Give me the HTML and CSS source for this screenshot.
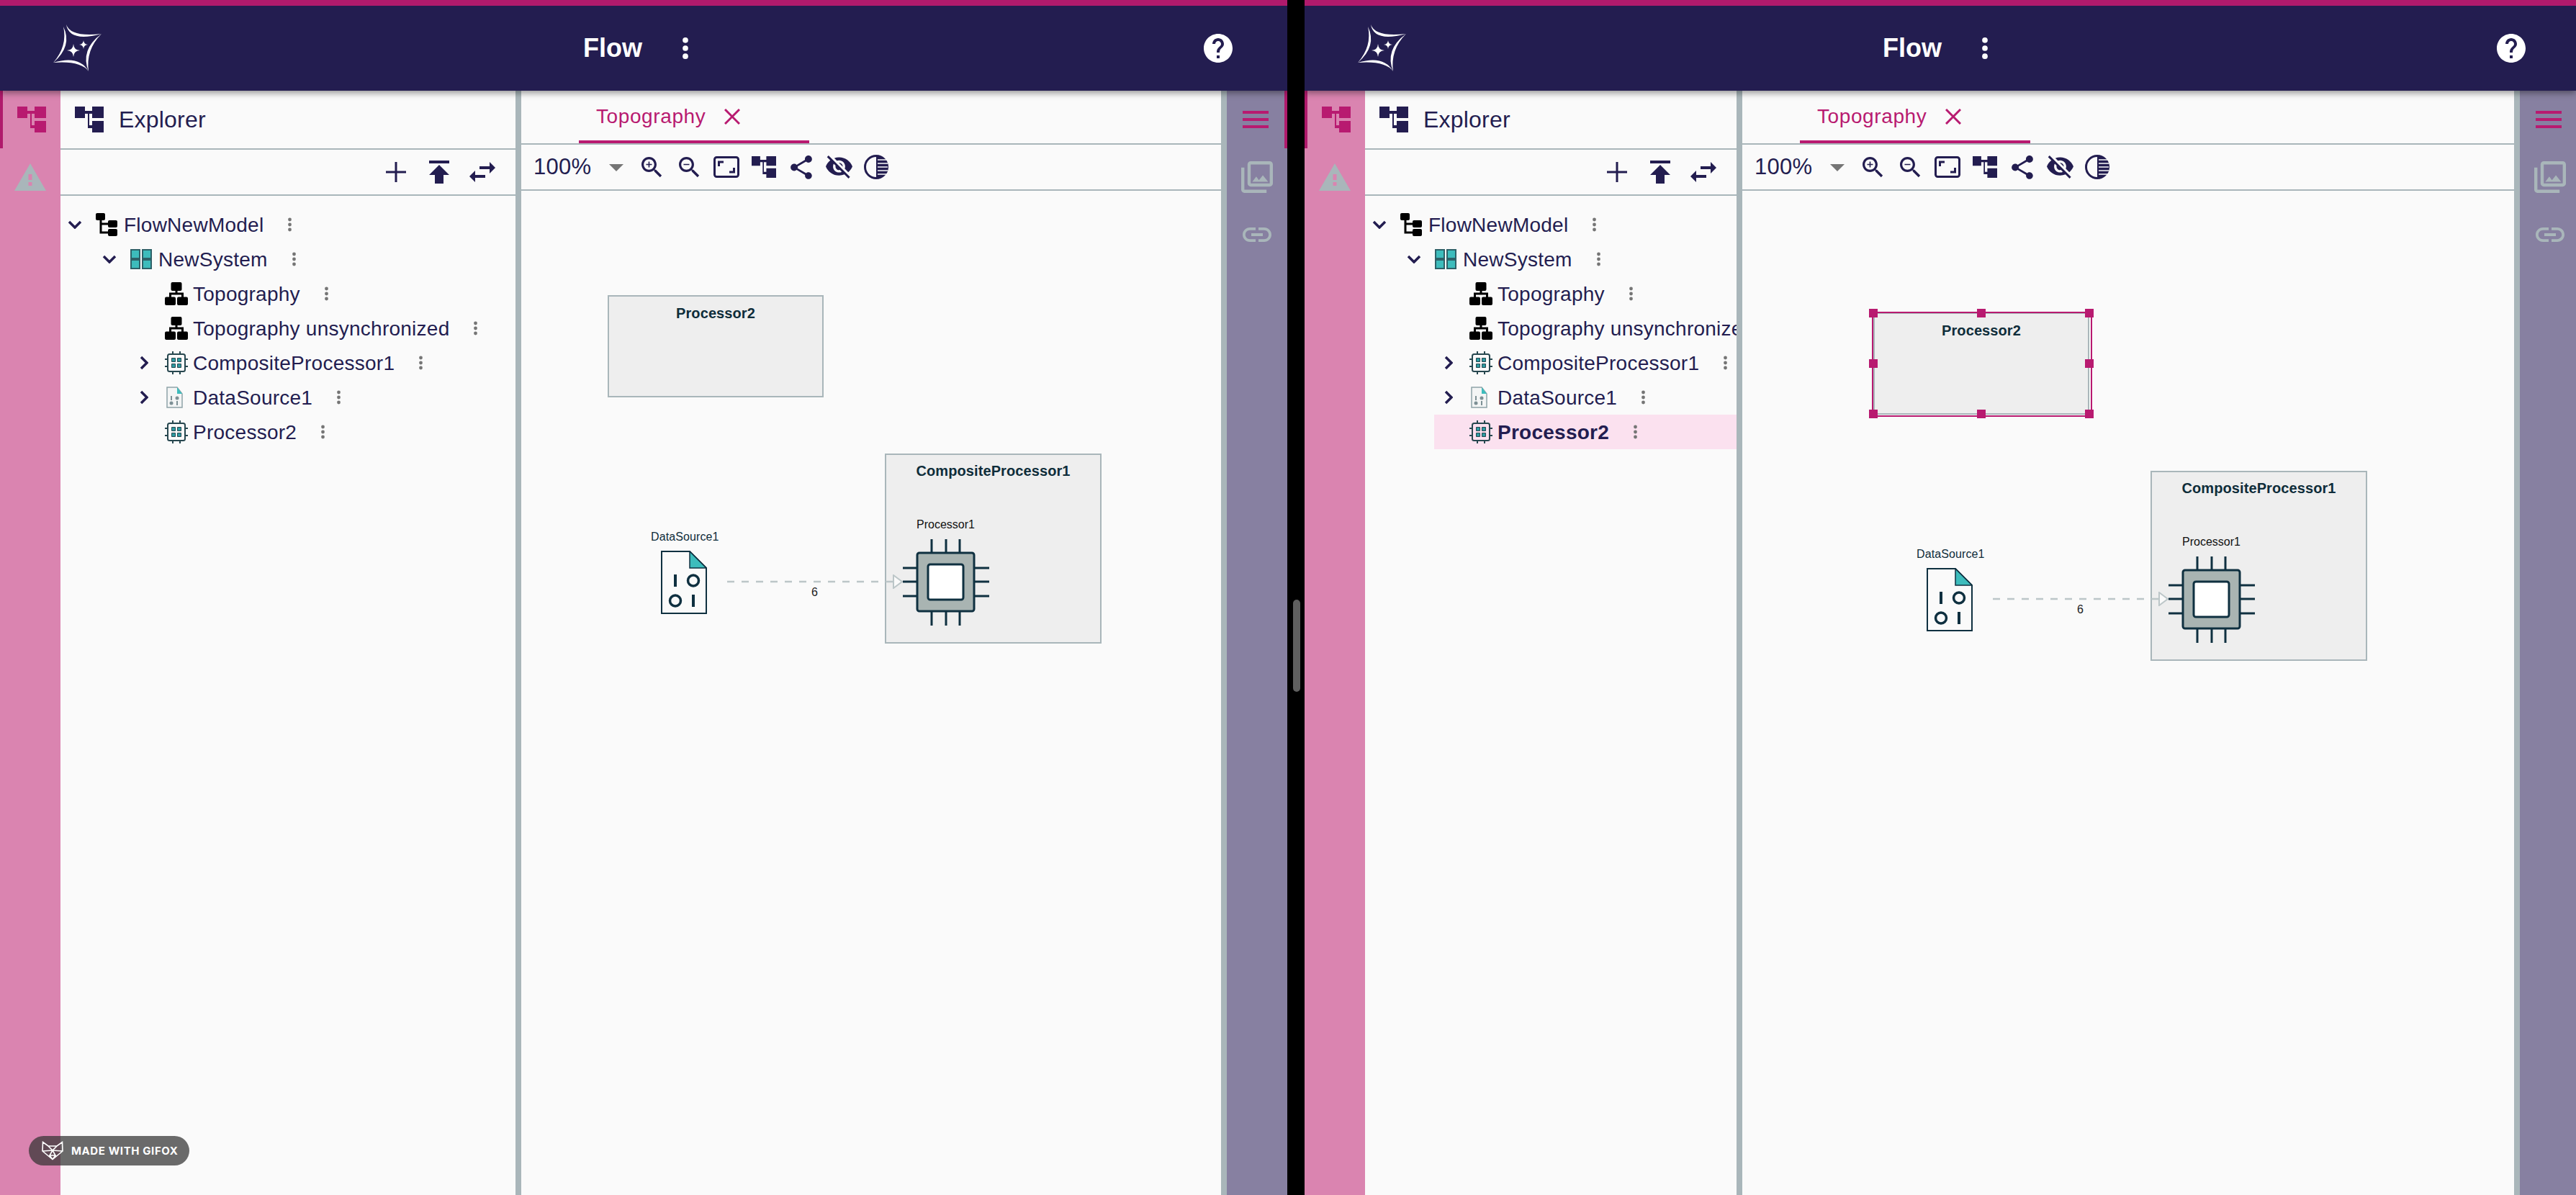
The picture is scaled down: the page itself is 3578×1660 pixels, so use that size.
FILE: index.html
```html
<!DOCTYPE html>
<html lang="en">
<head>
<meta charset="utf-8">
<title>Flow</title>
<link rel="stylesheet" href="styles.css">
</head>
<body>
<svg class="defs" aria-hidden="true">
  <symbol id="logo" viewBox="0 0 67 66">
    <path d="M18 0Q24 18 67 13Q22 25 18 0Z"/><path d="M67 13Q45 35 49 65Q37 35 67 13Z"/><path d="M49 65Q38 50 0 53Q36 42 49 65Z"/><path d="M0 53Q20 30 14 3Q27 30 0 53Z"/>
    <path d="M28 27Q28.500 35.500 37 36Q28.500 36.500 28 45Q27.500 36.500 19 36Q27.500 35.500 28 27Z"/><path d="M42 22Q42.400 27.600 48 28Q42.400 28.400 42 34Q41.600 28.400 36 28Q41.600 27.600 42 22Z"/>
  </symbol>
  <symbol id="help" viewBox="2 2 20 20"><path d="M12 2C6.48 2 2 6.48 2 12s4.48 10 10 10 10-4.48 10-10S17.52 2 12 2zm1 17h-2v-2h2v2zm2.070-7.750l-.9.920C13.450 12.900 13 13.500 13 15h-2v-.5c0-1.100.45-2.100 1.170-2.830l1.240-1.260c.37-.36.59-.86.59-1.410 0-1.100-.9-2-2-2s-2 .9-2 2H8c0-2.210 1.790-4 4-4s4 1.790 4 4c0 .88-.36 1.680-.93 2.250z"/></symbol>
  <symbol id="hier" viewBox="0 0 40 36" preserveAspectRatio="none"><path d="M0 0H14V16H0ZM24 0H40V16H24ZM24 20H40V36H24ZM14 6H24V10H20V26H24V30H18V10H14Z"/></symbol>
  <symbol id="warn" viewBox="0 0 44 38"><path class="warn-tri" d="M22 0L44 38H0Z"/><path class="warn-mark" d="M19.500 15H24.500V23H19.500ZM19.500 26H24.500V31H19.500Z"/></symbol>
  <symbol id="menu" viewBox="0 0 36 24"><path d="M0 0H36V4H0ZM0 10H36V14H0ZM0 20H36V24H0Z"/></symbol>
  <symbol id="gallery" viewBox="2 2 20 20"><path d="M20 4v12H8V4h12m0-2H8c-1.100 0-2 .9-2 2v12c0 1.100.9 2 2 2h12c1.100 0 2-.9 2-2V4c0-1.100-.9-2-2-2zm-8.500 9.670l1.690 2.260 2.480-3.100L19 15H9zM2 6v14c0 1.100.9 2 2 2h14v-2H4V6H2z"/></symbol>
  <symbol id="link" viewBox="2 7 20 10"><path d="M3.900 12c0-1.710 1.390-3.100 3.100-3.100h4V7H7c-2.760 0-5 2.240-5 5s2.240 5 5 5h4v-1.900H7c-1.710 0-3.100-1.390-3.100-3.100zM8 13h8v-2H8v2zm9-6h-4v1.900h4c1.710 0 3.100 1.390 3.100 3.100s-1.390 3.100-3.100 3.100h-4V17h4c2.760 0 5-2.240 5-5s-2.240-5-5-5z"/></symbol>
  <symbol id="plus" viewBox="0 0 28 28"><path d="M12.500 0H15.500V12.500H28V15.500H15.500V28H12.500V15.500H0V12.500H12.500Z"/></symbol>
  <symbol id="publish" viewBox="5 4 14 16"><path d="M5 4v2h14V4H5zm0 10h4v6h6v-6h4l-7-7-7 7z"/></symbol>
  <symbol id="swap" viewBox="3 5 18 14"><path d="M6.990 11L3 15l3.990 4v-3H14v-2H6.990v-3zM21 9l-4-4v3h-7v2h7v3l4-4z"/></symbol>
  <symbol id="dots" viewBox="0 0 5 20"><circle cx="2.500" cy="3" r="2.400"/><circle cx="2.500" cy="10" r="2.400"/><circle cx="2.500" cy="17" r="2.400"/></symbol>
  <symbol id="chev-down" viewBox="0 0 20 12"><path class="chev-line" d="M2 2L10 10L18 2"/></symbol>
  <symbol id="chev-right" viewBox="0 0 12 20"><path class="chev-line" d="M2 2L10 10L2 18"/></symbol>
  <symbol id="model" viewBox="0 0 30 32"><rect width="13" height="10" rx="2"/><rect x="17" y="10" width="13" height="10" rx="2"/><rect x="17" y="22" width="13" height="10" rx="2"/><path class="line-3" d="M7 9V27H18M7 15H18"/></symbol>
  <symbol id="system" viewBox="0 0 30 28"><path class="teal" d="M1 1H13V13H1ZM17 1H29V13H17ZM1 15H13V27H1ZM17 15H29V27H17Z"/></symbol>
  <symbol id="network" viewBox="0 0 32 32"><rect x="8.500" width="15" height="12" rx="2"/><rect y="20.500" width="15" height="11.500" rx="2"/><rect x="17" y="20.500" width="15" height="11.500" rx="2"/><path class="line-3" d="M16 11V16M7.500 21V16H24.500V21"/></symbol>
  <symbol id="chip" viewBox="0 0 32 32"><rect class="chip-body" x="4" y="4" width="24" height="24" rx="2.500"/><path class="chip-pin" d="M11 0V4M21 0V4M11 28V32M21 28V32M0 11H4M0 21H4M28 11H32M28 21H32"/><path class="chip-cell" d="M9.500 9.500H14.500V14.500H9.500ZM17.500 9.500H22.500V14.500H17.500ZM9.500 17.500H14.500V22.500H9.500ZM17.500 17.500H22.500V22.500H17.500Z"/></symbol>
  <symbol id="doc" viewBox="0 0 23 30"><path class="doc-sheet" d="M1 1H15L22 10V29H1Z"/><path class="doc-fold" d="M15 1L22 10H15Z"/><path class="doc-bits" d="M6 13H8V19H6ZM14 20H16V26H14Z"/><circle class="doc-bits" cx="15" cy="16" r="2.500"/><circle class="doc-bits" cx="7" cy="23" r="2.500"/></symbol>
  <symbol id="close" viewBox="0 0 22 22"><path class="close-line" d="M1 1L21 21M21 1L1 21"/></symbol>
  <symbol id="zoom-in" viewBox="3 3 18 18"><path d="M15.500 14h-.79l-.28-.27C15.410 12.590 16 11.110 16 9.500 16 5.910 13.090 3 9.500 3S3 5.910 3 9.500 5.910 16 9.500 16c1.610 0 3.090-.59 4.230-1.570l.27.28v.79l5 4.990L20.490 19l-4.990-5zm-6 0C7.010 14 5 11.990 5 9.500S7.010 5 9.500 5 14 7.010 14 9.500 11.990 14 9.500 14zM12 10h-2v2H9v-2H7V9h2V7h1v2h2v1z"/></symbol>
  <symbol id="zoom-out" viewBox="3 3 18 18"><path d="M15.500 14h-.79l-.28-.27C15.410 12.590 16 11.110 16 9.500 16 5.910 13.090 3 9.500 3S3 5.910 3 9.500 5.910 16 9.500 16c1.610 0 3.090-.59 4.230-1.570l.27.28v.79l5 4.990L20.490 19l-4.990-5zm-6 0C7.010 14 5 11.990 5 9.500S7.010 5 9.500 5 14 7.010 14 9.500 11.990 14 9.500 14zM7 9h5v1H7z"/></symbol>
  <symbol id="fit" viewBox="0 0 36 30"><rect class="fit-line" x="1.500" y="1.500" width="33" height="27" rx="3"/><path class="fit-line" d="M7.500 14V8H14M28.500 16V22H22"/></symbol>
  <symbol id="share" viewBox="3 2 18 20"><path d="M18 16.080c-.76 0-1.440.3-1.960.77L8.910 12.700c.05-.23.09-.46.09-.7s-.04-.47-.09-.7l7.050-4.110c.54.5 1.250.81 2.040.81 1.660 0 3-1.340 3-3s-1.340-3-3-3-3 1.340-3 3c0 .24.04.47.09.7L8.040 9.810C7.500 9.310 6.790 9 6 9c-1.660 0-3 1.340-3 3s1.340 3 3 3c.79 0 1.500-.31 2.040-.81l7.120 4.160c-.05.21-.08.43-.08.65 0 1.610 1.310 2.920 2.920 2.920 1.610 0 2.920-1.310 2.920-2.920s-1.310-2.920-2.920-2.920z"/></symbol>
  <symbol id="eye-off" viewBox="1 3 22 19"><path d="M12 7c2.760 0 5 2.240 5 5 0 .65-.13 1.260-.36 1.830l2.920 2.920c1.510-1.260 2.700-2.890 3.430-4.750-1.730-4.390-6-7.500-11-7.500-1.400 0-2.740.25-3.980.7l2.160 2.160C10.740 7.130 11.350 7 12 7zM2 4.270l2.280 2.280.46.46C3.080 8.300 1.780 10.020 1 12c1.730 4.390 6 7.500 11 7.500 1.550 0 3.030-.3 4.380-.84l.42.42L19.730 22 21 20.730 3.270 3 2 4.270zM7.530 9.800l1.550 1.550c-.05.21-.08.43-.08.65 0 1.660 1.340 3 3 3 .22 0 .44-.03.65-.08l1.550 1.550c-.67.33-1.410.53-2.200.53-2.760 0-5-2.240-5-5 0-.79.2-1.530.53-2.200zm4.310-.78l3.150 3.150.02-.16c0-1.660-1.340-3-3-3l-.17.01z"/></symbol>
  <symbol id="contrast" viewBox="0 0 34 34"><path d="M17 1.500A15.500 15.500 0 0 1 17 32.500Z"/><circle class="fit-line" cx="17" cy="17" r="15.500"/><path class="stripes" d="M19 7H32M19 12H33M19 17H33M19 22H33M19 27H32"/></symbol>
  <symbol id="big-doc" viewBox="0 0 64 88"><path class="bd-sheet" d="M1 1H40L63 24V87H1Z"/><path class="bd-fold" d="M40 1L63 24H40Z"/><path class="bd-bit" d="M18 33H22V50H18ZM43 61H47V78H43Z"/><ellipse class="bd-ring" cx="45" cy="41.500" rx="7.500" ry="7.500"/><ellipse class="bd-ring" cx="20" cy="69.500" rx="7.500" ry="7.500"/></symbol>
  <symbol id="big-chip" viewBox="0 0 120 120"><path class="bc-pin" d="M40 0V19M60 0V19M79 0V19M40 100V120M60 100V120M79 100V120M0 40H20M0 59H20M0 79H20M100 40H120M100 59H120M100 79H120"/><rect class="bc-body" x="20" y="19" width="79" height="81" rx="3"/><rect class="bc-core" x="35" y="35" width="49" height="49" rx="3"/></symbol>
  <symbol id="edge" viewBox="0 0 244 20"><path class="edge-line" d="M0 10H231"/><path class="edge-head" d="M231 1L243 10L231 19Z"/></symbol>
  <symbol id="fox" viewBox="0 0 30 27"><path class="fox-line" d="M1.500 1.500L9 7H21L28.500 1.500L29 14L15 25.500L1 14ZM9 7L15 13L21 7M1 14L15 13L29 14M15 13L11 20H19L15 13M11 20L15 25.500L19 20"/></symbol>
</svg>

<main class="screen">
  <section class="window window-left">
    <header class="topbar">
      <svg class="logo"><use href="#logo"/></svg>
      <div class="app-title title-left"><span class="title-text">Flow</span><svg class="title-dots"><use href="#dots"/></svg></div>
      <svg class="help"><use href="#help"/></svg>
    </header>
    <div class="workspace">
      <nav class="side-left">
        <div class="side-item side-item-active"><svg class="ico-hier"><use href="#hier"/></svg></div>
        <div class="side-item"><svg class="ico-warn"><use href="#warn"/></svg></div>
      </nav>
      <aside class="explorer explorer-wide">
        <div class="explorer-head"><svg class="ico-hier"><use href="#hier"/></svg><span class="explorer-title">Explorer</span></div>
        <div class="explorer-tools">
          <span class="tool"><svg class="ico-plus"><use href="#plus"/></svg></span>
          <span class="tool"><svg class="ico-publish"><use href="#publish"/></svg></span>
          <span class="tool"><svg class="ico-swap"><use href="#swap"/></svg></span>
        </div>
        <ul class="tree">
          <li class="row level-0"><span class="chev-slot"><svg class="chev-d"><use href="#chev-down"/></svg></span><span class="icon-slot"><svg class="ico-model"><use href="#model"/></svg></span><span class="label">FlowNewModel</span><svg class="row-dots"><use href="#dots"/></svg></li>
          <li class="row level-1"><span class="chev-slot"><svg class="chev-d"><use href="#chev-down"/></svg></span><span class="icon-slot"><svg class="ico-system"><use href="#system"/></svg></span><span class="label">NewSystem</span><svg class="row-dots"><use href="#dots"/></svg></li>
          <li class="row level-2"><span class="chev-slot"></span><span class="icon-slot"><svg class="ico-32"><use href="#network"/></svg></span><span class="label">Topography</span><svg class="row-dots"><use href="#dots"/></svg></li>
          <li class="row level-2"><span class="chev-slot"></span><span class="icon-slot"><svg class="ico-32"><use href="#network"/></svg></span><span class="label">Topography unsynchronized</span><svg class="row-dots"><use href="#dots"/></svg></li>
          <li class="row level-2"><span class="chev-slot"><svg class="chev-r"><use href="#chev-right"/></svg></span><span class="icon-slot"><svg class="ico-32"><use href="#chip"/></svg></span><span class="label">CompositeProcessor1</span><svg class="row-dots"><use href="#dots"/></svg></li>
          <li class="row level-2"><span class="chev-slot"><svg class="chev-r"><use href="#chev-right"/></svg></span><span class="icon-slot"><svg class="ico-doc"><use href="#doc"/></svg></span><span class="label">DataSource1</span><svg class="row-dots"><use href="#dots"/></svg></li>
          <li class="row level-2"><span class="chev-slot"></span><span class="icon-slot"><svg class="ico-32"><use href="#chip"/></svg></span><span class="label">Processor2</span><svg class="row-dots"><use href="#dots"/></svg></li>
        </ul>
      </aside>
      <div class="splitter"></div>
      <div class="main">
        <div class="tabs"><div class="tab"><span>Topography</span><svg class="ico-close"><use href="#close"/></svg></div></div>
        <div class="toolbar">
          <div class="zoom-select"><span class="zoom-value">100%</span><span class="caret"></span></div>
          <span class="tbtn"><svg class="ico-zoom"><use href="#zoom-in"/></svg></span>
          <span class="tbtn"><svg class="ico-zoom"><use href="#zoom-out"/></svg></span>
          <span class="tbtn"><svg class="ico-fit"><use href="#fit"/></svg></span>
          <span class="tbtn"><svg class="ico-thier"><use href="#hier"/></svg></span>
          <span class="tbtn"><svg class="ico-share"><use href="#share"/></svg></span>
          <span class="tbtn"><svg class="ico-eye"><use href="#eye-off"/></svg></span>
          <span class="tbtn"><svg class="ico-contrast"><use href="#contrast"/></svg></span>
        </div>
        <div class="canvas">
          <div class="diagram">
            <div class="group group-proc"><span class="group-title">Processor2</span></div>
            <div class="group group-comp"><span class="group-title">CompositeProcessor1</span></div>
            <span class="node-label label-ds">DataSource1</span>
            <svg class="node-ds"><use href="#big-doc"/></svg>
            <svg class="edge"><use href="#edge"/></svg>
            <span class="edge-label">6</span>
            <span class="node-label label-p1">Processor1</span>
            <svg class="node-p1"><use href="#big-chip"/></svg>
          </div>
        </div>
      </div>
      <div class="splitter"></div>
      <nav class="side-right">
        <div class="side-item side-item-marked"><svg class="ico-menu"><use href="#menu"/></svg></div>
        <div class="side-item"><svg class="ico-gallery"><use href="#gallery"/></svg></div>
        <div class="side-item"><svg class="ico-link"><use href="#link"/></svg></div>
      </nav>
    </div>
    <div class="gifox"><svg class="ico-fox"><use href="#fox"/></svg><span>MADE WITH GIFOX</span></div>
  </section>

  <div class="gutter"><div class="thumb"></div></div>

  <section class="window window-right">
    <header class="topbar">
      <svg class="logo"><use href="#logo"/></svg>
      <div class="app-title title-right"><span class="title-text">Flow</span><svg class="title-dots"><use href="#dots"/></svg></div>
      <svg class="help"><use href="#help"/></svg>
    </header>
    <div class="workspace">
      <nav class="side-left">
        <div class="side-item side-item-active"><svg class="ico-hier"><use href="#hier"/></svg></div>
        <div class="side-item"><svg class="ico-warn"><use href="#warn"/></svg></div>
      </nav>
      <aside class="explorer explorer-narrow">
        <div class="explorer-head"><svg class="ico-hier"><use href="#hier"/></svg><span class="explorer-title">Explorer</span></div>
        <div class="explorer-tools">
          <span class="tool"><svg class="ico-plus"><use href="#plus"/></svg></span>
          <span class="tool"><svg class="ico-publish"><use href="#publish"/></svg></span>
          <span class="tool"><svg class="ico-swap"><use href="#swap"/></svg></span>
        </div>
        <ul class="tree">
          <li class="row level-0"><span class="chev-slot"><svg class="chev-d"><use href="#chev-down"/></svg></span><span class="icon-slot"><svg class="ico-model"><use href="#model"/></svg></span><span class="label">FlowNewModel</span><svg class="row-dots"><use href="#dots"/></svg></li>
          <li class="row level-1"><span class="chev-slot"><svg class="chev-d"><use href="#chev-down"/></svg></span><span class="icon-slot"><svg class="ico-system"><use href="#system"/></svg></span><span class="label">NewSystem</span><svg class="row-dots"><use href="#dots"/></svg></li>
          <li class="row level-2"><span class="chev-slot"></span><span class="icon-slot"><svg class="ico-32"><use href="#network"/></svg></span><span class="label">Topography</span><svg class="row-dots"><use href="#dots"/></svg></li>
          <li class="row level-2"><span class="chev-slot"></span><span class="icon-slot"><svg class="ico-32"><use href="#network"/></svg></span><span class="label">Topography unsynchronized</span><svg class="row-dots"><use href="#dots"/></svg></li>
          <li class="row level-2"><span class="chev-slot"><svg class="chev-r"><use href="#chev-right"/></svg></span><span class="icon-slot"><svg class="ico-32"><use href="#chip"/></svg></span><span class="label">CompositeProcessor1</span><svg class="row-dots"><use href="#dots"/></svg></li>
          <li class="row level-2"><span class="chev-slot"><svg class="chev-r"><use href="#chev-right"/></svg></span><span class="icon-slot"><svg class="ico-doc"><use href="#doc"/></svg></span><span class="label">DataSource1</span><svg class="row-dots"><use href="#dots"/></svg></li>
          <li class="row level-2 row-selected"><span class="chev-slot"></span><span class="icon-slot"><svg class="ico-32"><use href="#chip"/></svg></span><span class="label">Processor2</span><svg class="row-dots"><use href="#dots"/></svg></li>
        </ul>
      </aside>
      <div class="splitter"></div>
      <div class="main">
        <div class="tabs"><div class="tab"><span>Topography</span><svg class="ico-close"><use href="#close"/></svg></div></div>
        <div class="toolbar">
          <div class="zoom-select"><span class="zoom-value">100%</span><span class="caret"></span></div>
          <span class="tbtn"><svg class="ico-zoom"><use href="#zoom-in"/></svg></span>
          <span class="tbtn"><svg class="ico-zoom"><use href="#zoom-out"/></svg></span>
          <span class="tbtn"><svg class="ico-fit"><use href="#fit"/></svg></span>
          <span class="tbtn"><svg class="ico-thier"><use href="#hier"/></svg></span>
          <span class="tbtn"><svg class="ico-share"><use href="#share"/></svg></span>
          <span class="tbtn"><svg class="ico-eye"><use href="#eye-off"/></svg></span>
          <span class="tbtn"><svg class="ico-contrast"><use href="#contrast"/></svg></span>
        </div>
        <div class="canvas">
          <div class="diagram diagram-panned">
            <div class="group group-proc"><span class="group-title">Processor2</span></div>
            <div class="selection">
              <i class="handle h-tl"></i><i class="handle h-tc"></i><i class="handle h-tr"></i>
              <i class="handle h-ml"></i><i class="handle h-mr"></i>
              <i class="handle h-bl"></i><i class="handle h-bc"></i><i class="handle h-br"></i>
            </div>
            <div class="group group-comp"><span class="group-title">CompositeProcessor1</span></div>
            <span class="node-label label-ds">DataSource1</span>
            <svg class="node-ds"><use href="#big-doc"/></svg>
            <svg class="edge"><use href="#edge"/></svg>
            <span class="edge-label">6</span>
            <span class="node-label label-p1">Processor1</span>
            <svg class="node-p1"><use href="#big-chip"/></svg>
          </div>
        </div>
      </div>
      <div class="splitter"></div>
      <nav class="side-right side-right-cut">
        <div class="side-item side-item-marked"><svg class="ico-menu"><use href="#menu"/></svg></div>
        <div class="side-item"><svg class="ico-gallery"><use href="#gallery"/></svg></div>
        <div class="side-item"><svg class="ico-link"><use href="#link"/></svg></div>
      </nav>
    </div>
  </section>
</main>
</body>
</html>
```

FILE: styles.css
```css
* { box-sizing: border-box; }
html, body { margin: 0; padding: 0; background: #000; }
body { font-family: "Liberation Sans", Arial, sans-serif; color: #231d50; }
svg { display: block; flex-shrink: 0; fill: currentColor; }
.defs { position: absolute; width: 0; height: 0; }

.screen { display: flex; width: 3578px; height: 1660px; overflow: hidden; }
.window { position: relative; display: flex; flex-direction: column; height: 100%; overflow: hidden; background: #fafafa; }
.window-left { width: 1788px; }
.window-right { width: 1766px; }
.gutter { width: 24px; height: 100%; background: #000; padding: 833px 0 0 8px; }
.thumb { width: 10px; height: 128px; border-radius: 5px; background: #5f5f5f; }

.topbar { position: relative; z-index: 5; flex: none; display: flex; align-items: center; height: 126px; padding: 0 0 0 74px; background: #231d50; border-top: 8px solid #b01a6c; box-shadow: 0 3px 9px rgba(0,0,0,.42); color: #fff; }
.logo { width: 67px; height: 66px; color: #fff; margin-top: -1px; }
.app-title { display: flex; align-items: center; }
.title-left { margin-left: 669px; }
.title-right { margin-left: 662px; }
.title-text { font-size: 36px; font-weight: 700; width: 85px; }
.title-dots { width: 8px; height: 32px; margin-left: 53px; color: #fff; }
.help { width: 40px; height: 40px; margin-left: auto; margin-right: 76px; color: #fff; }
.window-right .help { margin-right: 70px; }

.workspace { flex: 1; display: flex; min-height: 0; }
.side-left { flex: none; width: 84px; background: #da84b0; }
.side-right { flex: none; width: 84px; background: #8780a1; overflow: hidden; }
.side-right-cut { width: 78px; }
.side-item { display: flex; align-items: center; justify-content: center; width: 84px; height: 80px; flex-shrink: 0; }
.side-item-active { border-left: 4px solid #b01a6c; color: #b81a70; }
.side-item-marked { border-right: 4px solid #b01a6c; color: #b81a70; }
.ico-hier { width: 40px; height: 36px; }
.ico-warn { width: 44px; height: 38px; }
.warn-tri { fill: #a9b6ba; }
.warn-mark { fill: #da84b0; }
.ico-menu { width: 36px; height: 24px; }
.ico-gallery { width: 44px; height: 44px; color: #a9b6ba; }
.ico-link { width: 40px; height: 20px; color: #a9b6ba; }

.explorer { flex: none; display: flex; flex-direction: column; overflow: hidden; }
.explorer-wide { width: 632px; }
.explorer-narrow { width: 516px; }
.explorer-head { flex: none; display: flex; align-items: center; height: 82px; padding: 0 0 0 20px; border-bottom: 2px solid #a9b6ba; }
.explorer-title { font-size: 32px; margin-left: 21px; letter-spacing: .2px; }
.explorer-tools { flex: none; display: flex; justify-content: flex-end; height: 64px; padding-right: 16px; border-bottom: 2px solid #a9b6ba; }
.tool { display: flex; align-items: center; justify-content: center; width: 60px; }
.ico-plus { width: 28px; height: 28px; }
.ico-publish { width: 28px; height: 32px; }
.ico-swap { width: 36px; height: 28px; }

.tree { list-style: none; margin: 0; padding: 16px 0 0; }
.row { display: flex; align-items: center; height: 48px; padding-left: 6px; white-space: nowrap; font-size: 28px; letter-spacing: .25px; }
.label { padding-top: 2px; }
.level-1 { margin-left: 48px; }
.level-2 { margin-left: 96px; }
.row-selected { background: #fbe1ef; font-weight: 700; }
.chev-slot { flex: none; display: flex; align-items: center; justify-content: center; width: 28px; margin-right: 15px; }
.chev-d { width: 20px; height: 12px; }
.chev-r { width: 12px; height: 20px; }
.chev-line { fill: none; stroke: #231d50; stroke-width: 3.500; }
.icon-slot { flex: none; display: flex; align-items: center; width: 32px; margin-right: 7px; color: #000; }
.ico-model { width: 30px; height: 32px; }
.ico-system { width: 30px; height: 28px; }
.ico-32 { width: 32px; height: 32px; }
.ico-doc { width: 23px; height: 30px; margin-left: 2px; }
.line-3 { fill: none; stroke: #000; stroke-width: 3; }
.teal { fill: #3dbcbc; stroke: #2e6168; stroke-width: 2; }
.chip-body { fill: none; stroke: #27474f; stroke-width: 2; }
.chip-pin { fill: none; stroke: #27474f; stroke-width: 2; }
.chip-cell { fill: #2d9aa0; stroke: #27474f; stroke-width: 1; }
.doc-sheet { fill: #f3f5f5; stroke: #8ea3a8; stroke-width: 1.500; }
.doc-fold { fill: #3dbcbc; }
.doc-bits { fill: #7d9095; }
.row-dots { width: 5px; height: 20px; margin-left: 34px; color: #757575; }

.splitter { flex: none; width: 8px; background: #a9b6ba; }

.main { flex: 1; min-width: 0; display: flex; flex-direction: column; }
.tabs { flex: none; height: 75px; padding-left: 80px; border-bottom: 2px solid #a9b6ba; }
.tab { display: flex; align-items: center; width: 320px; height: 73px; padding: 2px 0 0 24px; border-bottom: 4px solid #b81a70; color: #b81a70; font-size: 28px; letter-spacing: .6px; }
.ico-close { width: 22px; height: 22px; margin-left: 26px; }
.close-line { fill: none; stroke: #b81a70; stroke-width: 3; }
.toolbar { flex: none; display: flex; align-items: stretch; height: 64px; padding-left: 17px; border-bottom: 2px solid #a9b6ba; }
.zoom-select { display: flex; align-items: center; width: 138px; }
.zoom-value { font-size: 31px; width: 81px; margin-right: 24px; letter-spacing: .3px; }
.caret { width: 0; height: 0; border-left: 10px solid transparent; border-right: 10px solid transparent; border-top: 10px solid #757575; margin-top: 2px; }
.tbtn { display: flex; align-items: center; justify-content: center; width: 52px; }
.ico-zoom { width: 29px; height: 29px; }
.ico-fit { width: 36px; height: 30px; }
.ico-thier { width: 34px; height: 30px; }
.ico-share { width: 30px; height: 33px; }
.ico-eye { width: 37px; height: 32px; }
.ico-contrast { width: 34px; height: 34px; }
.fit-line { fill: none; stroke: #231d50; stroke-width: 3; }
.stripes { fill: none; stroke: #fafafa; stroke-width: 1.500; }

.canvas { flex: 1; min-height: 0; overflow: hidden; }
.diagram { position: relative; width: 1000px; height: 1000px; color: #0f2d3a; }
.diagram-panned { margin: 24px 0 0 62px; }
.group { position: absolute; display: flex; justify-content: center; padding-top: 13px; background: #eeeeee; border: 2px solid #a9b6ba; }
.group-proc { left: 120px; top: 145px; width: 300px; height: 142px; }
.group-comp { left: 505px; top: 365px; width: 301px; height: 264px; padding-top: 12px; }
.group-title { font-size: 20px; font-weight: 700; line-height: 20px; letter-spacing: .1px; }
.node-label { position: absolute; font-size: 16px; line-height: 18px; white-space: nowrap; }
.label-ds { left: 180px; top: 472px; letter-spacing: .1px; }
.label-p1 { left: 549px; top: 455px; color: #111; }
.node-ds { position: absolute; left: 194px; top: 500px; width: 64px; height: 88px; }
.node-p1 { position: absolute; left: 530px; top: 484px; width: 120px; height: 120px; }
.edge { position: absolute; left: 286px; top: 533px; width: 244px; height: 20px; }
.edge-label { position: absolute; left: 403px; top: 549px; font-size: 16px; line-height: 18px; color: #222; }
.bd-sheet { fill: #fafafa; stroke: #0f3040; stroke-width: 2; }
.bd-fold { fill: #3dbcbc; stroke: #0f3040; stroke-width: 1.500; }
.bd-bit { fill: #0f3040; }
.bd-ring { fill: none; stroke: #0f3040; stroke-width: 3.500; }
.bc-pin { fill: none; stroke: #0f3040; stroke-width: 3; }
.bc-body { fill: #a9b4b2; stroke: #0f3040; stroke-width: 3; }
.bc-core { fill: #fff; stroke: #0f3040; stroke-width: 3; }
.edge-line { fill: none; stroke: #bcc6c8; stroke-width: 2.500; stroke-dasharray: 10 10; }
.edge-head { fill: #fafafa; stroke: #bcc6c8; stroke-width: 2; }

.selection { position: absolute; left: 118px; top: 144px; width: 306px; height: 146px; border: 2px solid #b81a70; }
.handle { position: absolute; width: 12px; height: 12px; background: #b81a70; }
.h-tl, .h-tc, .h-tr { top: -6px; }
.h-ml, .h-mr { top: 64px; }
.h-bl, .h-bc, .h-br { top: 134px; }
.h-tl, .h-ml, .h-bl { left: -6px; }
.h-tc, .h-bc { left: 144px; }
.h-tr, .h-mr, .h-br { left: 294px; }

.gifox { position: absolute; z-index: 6; left: 40px; bottom: 41px; display: flex; align-items: center; width: 223px; height: 41px; padding-left: 18px; border-radius: 21px; background: rgba(50,50,50,.72); color: #fff; font-family: Inter, "Liberation Sans", sans-serif; font-size: 15px; font-weight: 700; letter-spacing: .6px; white-space: nowrap; }
.ico-fox { width: 30px; height: 27px; margin-right: 11px; }
.fox-line { fill: none; stroke: #fff; stroke-width: 1.600; }
```
